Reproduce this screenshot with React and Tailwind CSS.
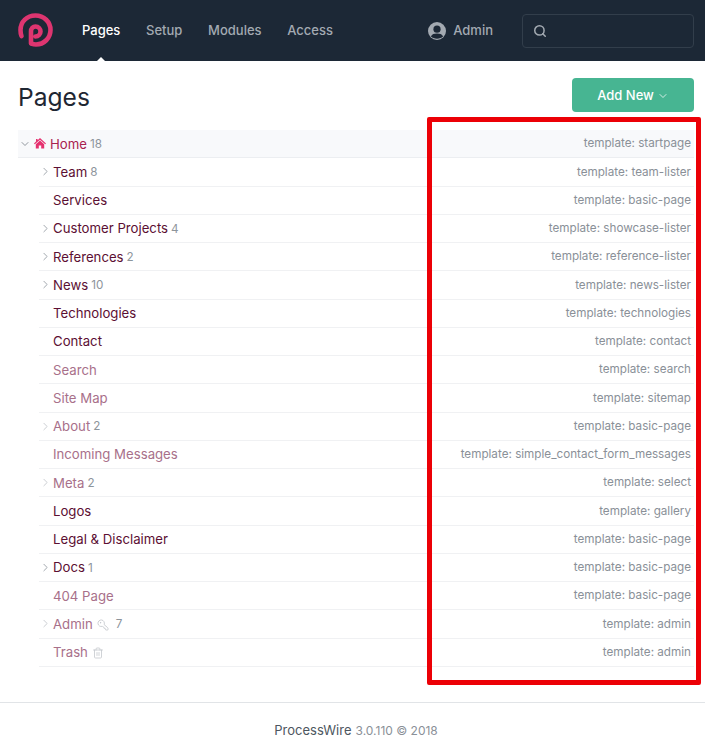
import React from "react";
import { ChevronDown, ChevronRight, Search, KeyRound, Trash2 } from "lucide-react";

const rows = [
  { name: "Team", count: "8", tpl: "team-lister", arrow: true },
  { name: "Services", tpl: "basic-page" },
  { name: "Customer Projects", count: "4", tpl: "showcase-lister", arrow: true },
  { name: "References", count: "2", tpl: "reference-lister", arrow: true },
  { name: "News", count: "10", tpl: "news-lister", arrow: true },
  { name: "Technologies", tpl: "technologies" },
  { name: "Contact", tpl: "contact" },
  { name: "Search", tpl: "search", dim: true },
  { name: "Site Map", tpl: "sitemap", dim: true },
  { name: "About", count: "2", tpl: "basic-page", arrow: true, dim: true },
  { name: "Incoming Messages", tpl: "simple_contact_form_messages", dim: true },
  { name: "Meta", count: "2", tpl: "select", arrow: true, dim: true },
  { name: "Logos", tpl: "gallery" },
  { name: "Legal & Disclaimer", tpl: "basic-page" },
  { name: "Docs", count: "1", tpl: "basic-page", arrow: true },
  { name: "404 Page", tpl: "basic-page", dim: true },
  { name: "Admin", count: "7", tpl: "admin", arrow: true, dim: true, icon: "key" },
  { name: "Trash", tpl: "admin", dim: true, icon: "trash" },
];

function Logo() {
  return (
    <svg width="36" height="36" viewBox="0 0 36 36" fill="none" aria-hidden="true">
      <path
        d="M3.5 23C2.7 21 2.5 19 2.5 17C2.5 8.5 9 2.5 17.5 2.5C26 2.5 32.5 9 32.5 17C32.5 25 26 31.5 18 31.5C16.5 31.5 14.5 31 13 30.5V18.5C13 15.5 15 13.5 17.5 13.5C20.5 13.5 22.5 15.8 22.5 18.5C22.5 21.2 20.4 23.5 17.5 23.5"
        stroke="#dd3570"
        strokeWidth="4.6"
        strokeLinecap="round"
        strokeLinejoin="round"
      />
    </svg>
  );
}

function UserIcon() {
  return (
    <svg width="18" height="18" viewBox="0 0 18 18" aria-hidden="true">
      <circle cx="9" cy="9" r="9" fill="#a3aab2" />
      <circle cx="9" cy="7.2" r="3.6" fill="#1c2836" />
      <path d="M2.9 14.6C4 12.2 6.2 11.6 9 11.6C11.8 11.6 14 12.2 15.1 14.6C13.6 16.1 11.4 16.7 9 16.7C6.6 16.7 4.4 16.1 2.9 14.6Z" fill="#1c2836" />
    </svg>
  );
}

function HomeIcon() {
  return (
    <svg width="12" height="11" viewBox="0 0 12 11" aria-hidden="true">
      <path d="M6 0L12 5.4L11.2 6.3L6 1.7L0.8 6.3L0 5.4L2 3.6V1H3.6V2.2Z" fill="#e5316f" />
      <path d="M6 2.6L10.2 6.3V10.6H7.2V7.4H4.8V10.6H1.8V6.3Z" fill="#e5316f" />
    </svg>
  );
}

function Row({ r }) {
  return (
    <div className="h-[28.26px] flex items-center justify-between border-b border-[#f0f1f3]">
      <div className="flex items-center min-w-0 mt-[2px]">
        <span className="w-[14px] flex justify-start">
          {r.arrow && <ChevronRight size={13} strokeWidth={1.5} className={`-translate-y-[1px] ${r.dim ? "text-[#bfc3c8]" : "text-[#8d949b]"}`} />}
        </span>
        <span className={r.dim ? "text-[#a8708a]" : "text-[#5c0f33]"}>{r.name}</span>
        {r.icon === "key" && <KeyRound size={12} strokeWidth={1.6} className="ml-[4px] text-[#c0c4c9] -scale-x-100" />}
        {r.icon === "trash" && <Trash2 size={12} strokeWidth={1.5} className="ml-[4px] text-[#c0c4c9]" />}
        {r.count && <span className={`text-[11.7px] text-[#8d949b] ${r.icon === "key" ? "ml-[7px]" : "ml-[3px]"}`}>{r.count}</span>}
      </div>
      <span className="text-[11.7px] text-[#8a9098] pr-[3px] whitespace-nowrap mt-[1px]">template: {r.tpl}</span>
    </div>
  );
}

export default function App() {
  return (
    <div className="relative w-[705px] h-[750px] bg-white overflow-hidden text-[13.2px] text-[#1c2836] [font-family:Inter,'Liberation_Sans',sans-serif]">
      <header className="h-[61px] bg-[#1c2836] flex items-center pl-[18px] pr-[11px]">
        <Logo />
        <nav className="flex items-center ml-[28px] gap-[25.7px] text-[13px] font-medium text-[#a3aab2]">
          <span className="relative text-white">
            Pages
            <span className="absolute left-1/2 -translate-x-1/2 top-[36px] w-0 h-0 border-x-[5px] border-x-transparent border-b-[5px] border-b-white" />
          </span>
          <span>Setup</span>
          <span>Modules</span>
          <span>Access</span>
        </nav>
        <div className="ml-auto flex items-center gap-[7px] text-[13px] font-medium text-[#a3aab2]">
          <UserIcon />
          <span>Admin</span>
        </div>
        <div className="ml-[29px] w-[172px] h-[34px] rounded-[4px] border border-[#323e4b] flex items-center pl-[10px]">
          <Search size={14} strokeWidth={2.6} className="text-[#a3aab2]" />
        </div>
      </header>

      <div className="flex items-center justify-between pl-[18px] pr-[11px] pt-[17px]">
        <h1 className="text-[24.6px] leading-[34px] font-normal text-[#1f2733] translate-y-[2px]">Pages</h1>
        <button className="w-[122px] h-[34px] pt-[2px] rounded-[4px] bg-[#47b592] text-white font-medium text-[13px] flex items-center justify-center gap-[3px]">
          Add New
          <ChevronDown size={12} strokeWidth={1.5} />
        </button>
      </div>

      <div className="mt-[18px] ml-[18px] mr-[11px]">
        <div className="h-[28.26px] flex items-center justify-between bg-[#f8f9fb] border-b border-[#eceef1]">
          <div className="flex items-center mt-[2px]">
            <ChevronDown size={12} strokeWidth={1.5} className="ml-[1px] mr-[1px] -translate-y-[1px] text-[#6d757d]" />
            <span className="ml-[2px] flex -translate-y-[1px]"><HomeIcon /></span>
            <span className="ml-[4px] text-[#a8224f]">Home</span>
            <span className="ml-[3px] text-[11.7px] text-[#8d949b]">18</span>
          </div>
          <span className="text-[11.7px] text-[#8a9098] pr-[3px] whitespace-nowrap mt-[1px]">template: startpage</span>
        </div>
        <div className="ml-[21px]">
          {rows.map((r) => (
            <Row key={r.name} r={r} />
          ))}
        </div>
      </div>

      <footer className="absolute left-0 right-0 top-[702px] h-[48px] border-t border-[#e1e4e7] flex items-center justify-center text-[13px] pl-[7px] pt-[8px]">
        <span className="text-[#4d5660]">ProcessWire</span>
        <span className="ml-[4px] text-[12px] text-[#8a9098]">3.0.110 © 2018</span>
      </footer>

      <div className="absolute left-[427px] top-[117px] w-[274px] h-[568px] border-[5px] border-[#ec0006] rounded-[2px] pointer-events-none" />
    </div>
  );
}
